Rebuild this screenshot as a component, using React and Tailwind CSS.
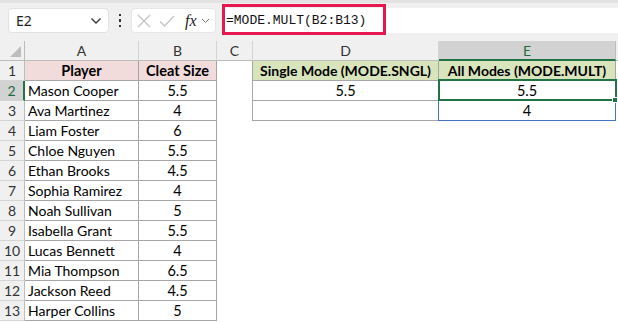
import React from "react";

const cols = [
  { w: 114 },
  { w: 78 },
  { w: 36 },
  { w: 186 },
  { w: 177 },
];

const data = [
  ["Mason Cooper", "5.5"],
  ["Ava Martinez", "4"],
  ["Liam Foster", "6"],
  ["Chloe Nguyen", "5.5"],
  ["Ethan Brooks", "4.5"],
  ["Sophia Ramirez", "4"],
  ["Noah Sullivan", "5"],
  ["Isabella Grant", "5.5"],
  ["Lucas Bennett", "4"],
  ["Mia Thompson", "6.5"],
  ["Jackson Reed", "4.5"],
  ["Harper Collins", "5"],
];

const cellFont = { fontFamily: "Lato, 'Liberation Sans', sans-serif" };

function RowHeader({ n, selected }) {
  return (
    <div
      className={
        "w-[25px] h-[20px] shrink-0 flex items-center justify-center text-[14px] border-b border-[#d4d4d4] " +
        (selected
          ? "bg-[#d2d2d2] text-[#1e6b41] border-r-2 border-r-[#217346]"
          : "bg-[#f0f0f0] text-[#333] border-r border-r-[#bcbcbc]")
      }
    >
      {n}
    </div>
  );
}

export default function App() {
  const rows = [];
  rows.push(
    <div key="r1" className="flex h-[20px]">
      <RowHeader n={1} />
      <div className="w-[114px] h-[20px] bg-[#f2dcdb] border-r border-b border-[#a6a6a6] flex items-center justify-center font-bold text-[14.5px] text-black">
        Player
      </div>
      <div className="w-[78px] h-[20px] bg-[#f2dcdb] border-r border-b border-[#a6a6a6] flex items-center justify-center font-bold text-[14.5px] text-black">
        Cleat Size
      </div>
      <div className="w-[36px] h-[20px] border-r border-[#a6a6a6]" />
      <div className="w-[186px] h-[20px] bg-[#d8e4bc] border-r border-b border-[#a6a6a6] flex items-center justify-center font-bold text-[14px] text-black">
        Single Mode (MODE.SNGL)
      </div>
      <div className="w-[177px] h-[20px] bg-[#d8e4bc] border-r border-b border-[#a6a6a6] flex items-center justify-center font-bold text-[14px] text-black">
        All Modes (MODE.MULT)
      </div>
    </div>
  );
  data.forEach(([name, size], i) => {
    const r = i + 2;
    const d = r === 2 ? "5.5" : "";
    const e = r === 2 ? "5.5" : r === 3 ? "4" : "";
    const inDE = r <= 3;
    rows.push(
      <div key={r} className="flex h-[20px]">
        <RowHeader n={r} selected={r === 2} />
        <div className="w-[114px] h-[20px] border-r border-b border-[#a6a6a6] flex items-center pl-[3px] text-[14px] text-black">
          {name}
        </div>
        <div className="w-[78px] h-[20px] border-r border-b border-[#a6a6a6] flex items-center justify-center text-[14.5px] text-black">
          {size}
        </div>
        <div
          className={
            "w-[36px] h-[20px] " + (inDE ? "border-r border-[#a6a6a6]" : "")
          }
        />
        <div
          className={
            "w-[186px] h-[20px] flex items-center justify-center text-[14.5px] text-black " +
            (inDE ? "border-r border-b border-[#a6a6a6]" : "")
          }
        >
          {d}
        </div>
        <div
          className={
            "w-[177px] h-[20px] flex items-center justify-center text-[14.5px] text-black " +
            (inDE ? "border-r border-b border-[#a6a6a6]" : "")
          }
        >
          {e}
        </div>
      </div>
    );
  });

  return (
    <div className="w-[618px] h-[322px] overflow-hidden bg-white relative">
      <div className="h-[3px] bg-[#e3e3e3]" />
      <div
        className="h-[38px] bg-[#f0f0f0] flex items-start pt-[5px] pl-[8px] gap-0"
        style={{ fontFamily: "'Noto Sans', sans-serif" }}
      >
        <div className="w-[101px] h-[25px] bg-white rounded-[4px] border border-[#e2e2e2] flex items-center justify-between pl-[7px] pr-[6px]">
          <span className="text-[14px] text-[#222]">E2</span>
          <svg width="12" height="8" viewBox="0 0 12 8">
            <path d="M1.5 1.5 L6 6 L10.5 1.5" fill="none" stroke="#333" strokeWidth="1.3" />
          </svg>
        </div>
        <div className="w-[22px] h-[25px] flex flex-col items-center justify-center gap-[3px]">
          <div className="w-[2.5px] h-[2.5px] bg-[#333]" />
          <div className="w-[2.5px] h-[2.5px] bg-[#333]" />
          <div className="w-[2.5px] h-[2.5px] bg-[#333]" />
        </div>
        <div className="w-[85px] h-[25px] bg-white rounded-[4px] border border-[#e6e6e6] flex items-center pl-[5px]">
          <svg width="14" height="14" viewBox="0 0 14 14">
            <path d="M1 1 L13 13 M13 1 L1 13" stroke="#c4c4c4" strokeWidth="1.3" />
          </svg>
          <svg width="16" height="14" viewBox="0 0 16 14" className="ml-[8px]">
            <path d="M1 7.5 L5.5 12 L15 2" fill="none" stroke="#c4c4c4" strokeWidth="1.3" />
          </svg>
          <span
            className="ml-[10px] text-[16px] italic text-[#222] leading-none"
            style={{ fontFamily: "'Liberation Serif', serif" }}
          >
            fx
          </span>
          <svg width="9" height="6" viewBox="0 0 9 6" className="ml-[4px]">
            <path d="M1 1 L4.5 4.5 L8 1" fill="none" stroke="#777" strokeWidth="1" />
          </svg>
        </div>
        <div className="ml-[6px] flex-1 h-[25px] bg-white flex items-center pl-[4px]">
          <span
            className="text-[13px] text-[#111]"
            style={{ fontFamily: "'Liberation Mono', monospace" }}
          >
            =MODE.MULT(B2:B13)
          </span>
        </div>
      </div>
      <div className="absolute left-[222px] top-[4px] w-[164px] h-[31px] border-[3px] border-[#e5194d]" />

      <div style={cellFont}>
        <div className="flex h-[20px] text-[14px] text-[#333]">
          <div className="w-[25px] h-[20px] bg-[#f0f0f0] border-r border-b border-[#bcbcbc] relative">
            <svg width="11" height="11" viewBox="0 0 11 11" className="absolute right-[3px] bottom-[3px]">
              <path d="M11 0 L11 11 L0 11 Z" fill="#bdbdbd" />
            </svg>
          </div>
          {["A", "B", "C", "D"].map((c, i) => (
            <div
              key={c}
              style={{ width: cols[i].w }}
              className="h-[20px] bg-[#f0f0f0] border-r border-r-[#d4d4d4] border-b border-b-[#bcbcbc] flex items-center justify-center"
            >
              {c}
            </div>
          ))}
          <div className="w-[177px] h-[20px] bg-[#d2d2d2] border-r border-r-[#bcbcbc] border-b-2 border-b-[#217346] flex items-center justify-center text-[#1e6b41]">
            E
          </div>
          <div className="flex-1 h-[20px] bg-[#f0f0f0] border-b border-[#bcbcbc]" />
        </div>
        {rows}
      </div>

      <div className="absolute left-[438px] top-[80px] w-[178px] h-[41px] border border-[#4472c4]" />
      <div className="absolute left-[438px] top-[79px] w-[179px] h-[22px] border-2 border-[#217346]" />
      <div className="absolute left-[612px] top-[97px] w-[6px] h-[6px] bg-[#217346] border border-white" />
    </div>
  );
}
